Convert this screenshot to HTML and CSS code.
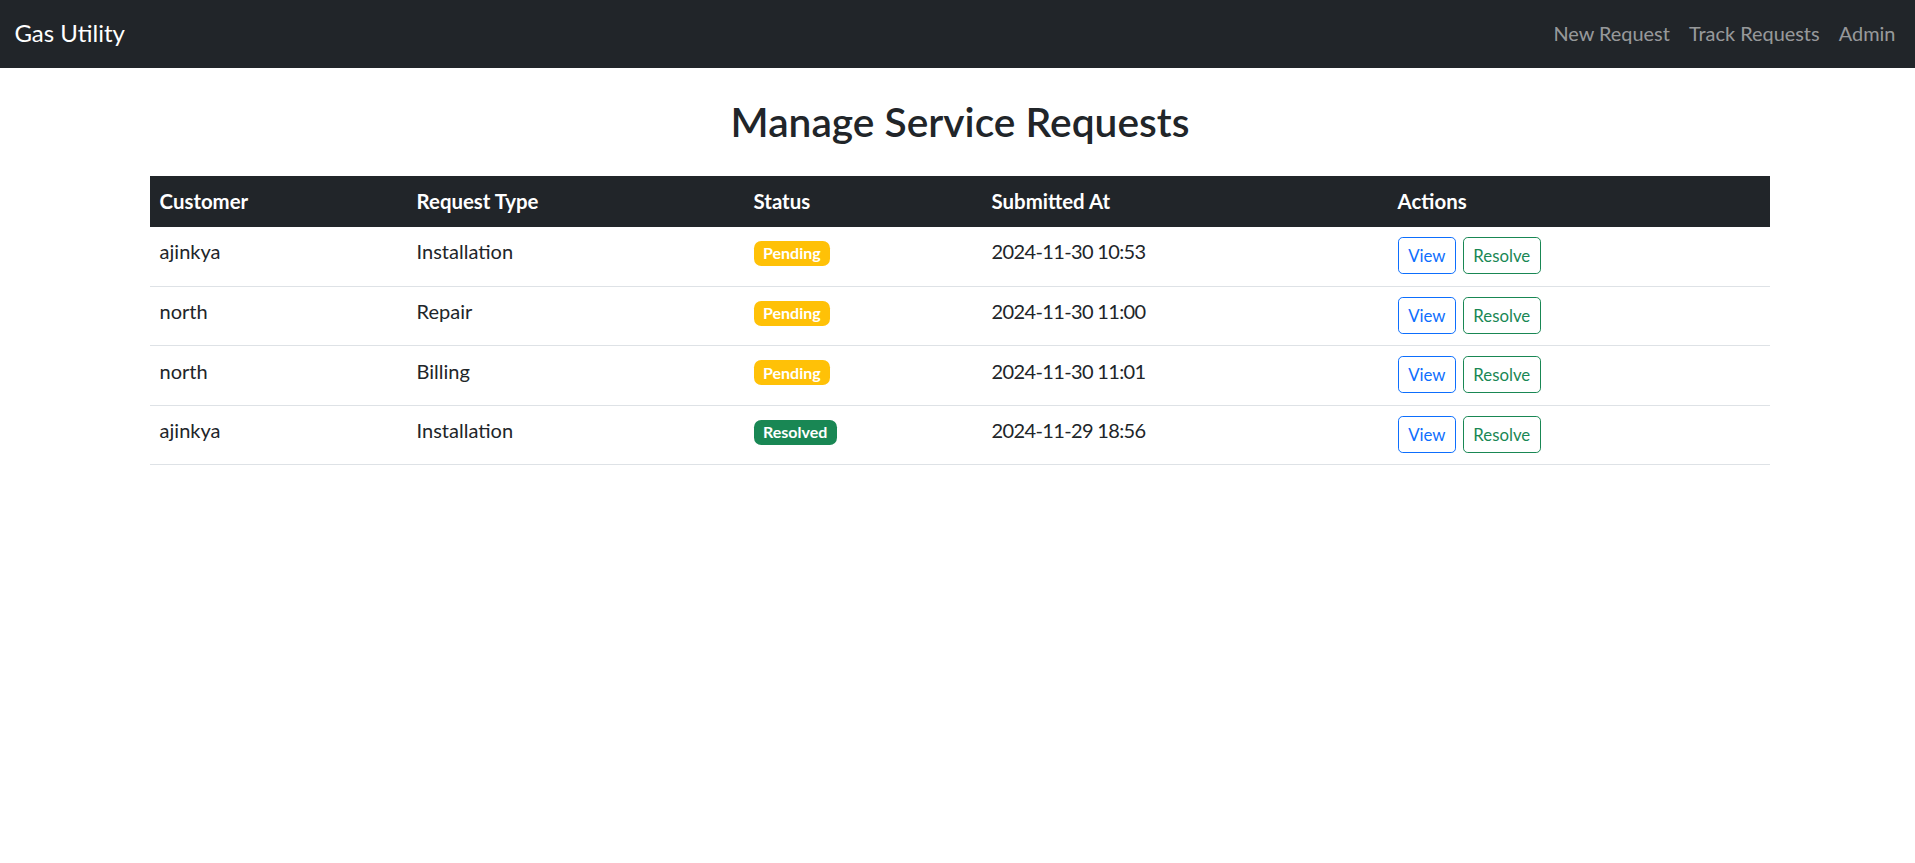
FILE: index.html
```html
<!DOCTYPE html>
<html lang="en">
<head>
<meta charset="utf-8">
<title>Gas Utility</title>
<link rel="stylesheet" href="styles.css">
</head>
<body>
<nav class="navbar">
  <a class="brand" href="#">Gas Utility</a>
  <ul class="nav">
    <li><a class="nav-link" href="#">New Request</a></li>
    <li><a class="nav-link" href="#">Track Requests</a></li>
    <li><a class="nav-link" href="#">Admin</a></li>
  </ul>
</nav>
<main class="container">
  <h2 class="title">Manage Service Requests</h2>
  <table class="table">
    <colgroup>
      <col class="c-customer"><col class="c-type"><col class="c-status"><col class="c-date"><col class="c-actions">
    </colgroup>
    <thead>
      <tr><th>Customer</th><th>Request Type</th><th>Status</th><th>Submitted At</th><th>Actions</th></tr>
    </thead>
    <tbody>
      <tr>
        <td>ajinkya</td><td>Installation</td><td><span class="badge badge-warning">Pending</span></td><td class="date">2024-11-30 10:53</td>
        <td class="actions"><a class="btn btn-view" href="#">View</a><a class="btn btn-resolve" href="#">Resolve</a></td>
      </tr>
      <tr>
        <td>north</td><td>Repair</td><td><span class="badge badge-warning">Pending</span></td><td class="date">2024-11-30 11:00</td>
        <td class="actions"><a class="btn btn-view" href="#">View</a><a class="btn btn-resolve" href="#">Resolve</a></td>
      </tr>
      <tr>
        <td>north</td><td>Billing</td><td><span class="badge badge-warning">Pending</span></td><td class="date">2024-11-30 11:01</td>
        <td class="actions"><a class="btn btn-view" href="#">View</a><a class="btn btn-resolve" href="#">Resolve</a></td>
      </tr>
      <tr>
        <td>ajinkya</td><td>Installation</td><td><span class="badge badge-success">Resolved</span></td><td class="date">2024-11-29 18:56</td>
        <td class="actions"><a class="btn btn-view" href="#">View</a><a class="btn btn-resolve" href="#">Resolve</a></td>
      </tr>
    </tbody>
  </table>
</main>
</body>
</html>
```
FILE: styles.css
```css
* { box-sizing: border-box; }
body {
  margin: 0;
  font-family: Lato, "Open Sans", sans-serif;
  font-size: 20px;
  line-height: 1.5;
  color: #212529;
  background: #fff;
}
a { text-decoration: none; }

.navbar {
  height: 68px;
  background: #212529;
  display: flex;
  align-items: center;
  justify-content: space-between;
  padding: 0 10px 0 14.4px;
}
.brand {
  color: #fff;
  font-size: 24px;
  line-height: 1.5;
  padding-bottom: 2px;
}
.nav {
  list-style: none;
  margin: 0;
  padding: 0;
  display: flex;
}
.nav-link {
  display: block;
  padding: 0 9.6px;
  color: rgba(255, 255, 255, 0.55);
  font-size: 19.9px;
}

.container {
  padding: 0 145px 0 150px;
}
.title {
  margin: 30px 0 29px;
  text-align: center;
  font-size: 40.7px;
  font-weight: 600;
  line-height: 1.2;
}

.table {
  width: 100%;
  border-collapse: collapse;
  table-layout: fixed;
}
.c-customer { width: 257px; }
.c-type { width: 337px; }
.c-status { width: 238px; }
.c-date { width: 406px; }
.table th {
  background: #212529;
  color: #fff;
  font-weight: 700;
  font-size: 20.4px;
  text-align: left;
  height: 51px;
  padding: 0 9.6px;
  vertical-align: middle;
}
.table td {
  height: 59.4px;
  padding: 9.6px 9.6px 0;
  border-bottom: 1px solid #dee2e6;
  vertical-align: top;
}
.table td.date {
  letter-spacing: -0.64px;
}
.table td.actions {
  padding-top: 10.3px;
  line-height: 1;
}

.badge {
  display: inline-block;
  font-size: 16px;
  font-weight: 700;
  line-height: 1;
  color: #fff;
  padding: 4.5px 9.4px;
  border-radius: 7.2px;
  letter-spacing: 0;
}
.badge-warning { background: #ffc107; }
.badge-success { background: #198754; }

.btn {
  display: inline-block;
  font-size: 16.8px;
  line-height: 25.2px;
  padding: 4.8px 9.6px;
  border-radius: 4.8px;
  border: 1.2px solid;
  vertical-align: top;
}
.btn-view {
  color: #0d6efd;
  border-color: #0d6efd;
  margin-right: 6.6px;
}
.btn-resolve {
  color: #198754;
  border-color: #198754;
}
```
